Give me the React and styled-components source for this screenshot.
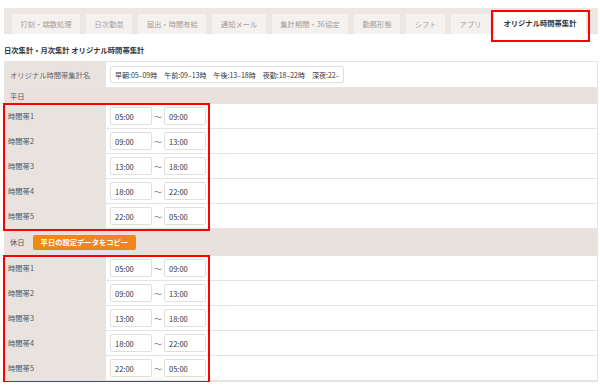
import styled, { createGlobalStyle } from "styled-components";

const GlobalStyle = createGlobalStyle`
  body {
    margin: 0;
    background: #fff;
    font-family: "Noto Sans CJK JP", "Noto Sans", sans-serif;
    color: #444;
  }
`

const tabs = [
    "打刻・端数処理",
    "日次勤怠",
    "届出・時間有給",
    "通知メール",
    "集計期間・36協定",
    "勤務形態",
    "シフト",
    "アプリ",
    "オリジナル時間帯集計",
];

const weekday = [
    ["05:00", "09:00"],
    ["09:00", "13:00"],
    ["13:00", "18:00"],
    ["18:00", "22:00"],
    ["22:00", "05:00"],
];

function TimeRows({ rows }) {
    return (
        <Marked>
            {rows.map((r, i) => (
                <Row key={i}>
                    <Label>時間帯{i + 1}</Label>
                    <Value>
                        <TimeInput defaultValue={r[0]} />
                        <Tilde>〜</Tilde>
                        <TimeInput defaultValue={r[1]} />
                    </Value>
                </Row>
            ))}
        </Marked>
    )
}

export default function App() {
    return (
        <>
            <GlobalStyle />
            <Page>
                <TabBar>
                    {tabs.map((t, i) => (
                        <Tab key={t} $active={i === tabs.length - 1}>{t}</Tab>
                    ))}
                </TabBar>
                <Title>日次集計・月次集計 オリジナル時間帯集計</Title>
                <Table>
                    <NameRow>
                        <Label $pad>オリジナル時間帯集計名</Label>
                        <Value>
                            <NameInput defaultValue="早朝:05–09時　午前:09–13時　午後:13–18時　夜勤:18–22時　深夜:22–05時" />
                        </Value>
                    </NameRow>
                    <Section>平日</Section>
                    <TimeRows rows={weekday} />
                    <Section $tall>
                        休日
                        <CopyButton>平日の設定データをコピー</CopyButton>
                    </Section>
                    <TimeRows rows={weekday} />
                </Table>
            </Page>
        </>
    )
}

const Page = styled.div`
  padding: 8px 2px 0 4px;
`

const TabBar = styled.div`
  display: flex;
  align-items: flex-end;
  gap: 6px;
  height: 26px;
  box-sizing: border-box;
  padding: 0 0 0 8px;
  background: #ede7e4;
`

const Tab = styled.div`
  position: relative;
  display: flex;
  align-items: center;
  height: ${p => (p.$active ? "22px" : "20px")};
  padding: 0 ${p => (p.$active ? "9.5px" : "8.5px")};
  margin-left: ${p => (p.$active ? "-2px" : "0")};
  background: ${p => (p.$active ? "#fff" : "#f5f1ef")};
  color: ${p => (p.$active ? "#333" : "#a39d9a")};
  font-size: 7.3px;
  font-weight: ${p => (p.$active ? "bold" : "normal")};
  white-space: nowrap;

  &::after {
    content: "";
    display: ${p => (p.$active ? "block" : "none")};
    position: absolute;
    left: -3px;
    right: -4px;
    top: -2px;
    bottom: -8px;
    border: 2px solid #f00;
  }
`

const Title = styled.div`
  margin: 11px 0 6px;
  font-size: 7.3px;
  font-weight: bold;
  color: #333;
`

const Table = styled.div`
  border: 1px solid #e9e4e1;
  border-left: none;
`

const NameRow = styled.div`
  display: grid;
  grid-template-columns: 102px 1fr;
  height: 25px;
  border-bottom: 1px solid #e9e4e1;
`

const Row = styled.div`
  display: grid;
  grid-template-columns: 102px 1fr;
  height: 25px;
  box-sizing: border-box;
  border-bottom: 1px solid #e9e4e1;
`

const Label = styled.div`
  display: flex;
  align-items: center;
  padding-left: ${p => (p.$pad ? "6px" : "4px")};
  background: #e9e3e0;
  font-size: 7.3px;
  color: ${p => (p.$pad ? "#666" : "#555")};
  white-space: nowrap;
`

const Value = styled.div`
  display: flex;
  align-items: center;
  padding-left: 4px;
  background: #fff;
`

const NameInput = styled.input`
  width: 234px;
  height: 17px;
  box-sizing: border-box;
  border: 1px solid #e2dedb;
  border-radius: 2px;
  padding: 0 4px;
  font-family: "Noto Sans CJK JP", sans-serif;
  font-size: 7px;
  color: #333;
  outline: none;
`

const TimeInput = styled.input`
  width: 42px;
  height: 18px;
  box-sizing: border-box;
  border: 1px solid #e2dedb;
  border-radius: 2px;
  padding: 0 4px;
  font-family: "Noto Sans CJK JP", sans-serif;
  font-size: 7.5px;
  color: #333;
  outline: none;
`

const Tilde = styled.span`
  width: 12px;
  text-align: center;
  font-size: 8px;
  color: #777;
`

const Section = styled.div`
  display: flex;
  align-items: center;
  gap: 8px;
  height: ${p => (p.$tall ? "26px" : "15px")};
  padding-left: 6px;
  background: #e8e1de;
  font-size: 7.3px;
  color: #555;
  border-bottom: 1px solid #e9e4e1;
`

const CopyButton = styled.div`
  display: flex;
  align-items: center;
  height: 15px;
  padding: 0 8px;
  border-radius: 2px;
  background: #f0861d;
  color: #fff;
  font-size: 7.3px;
  font-weight: bold;
`

const Marked = styled.div`
  position: relative;

  &::after {
    content: "";
    position: absolute;
    left: -1px;
    top: -1px;
    width: 207px;
    bottom: -2px;
    border: 2px solid #f00;
    box-sizing: border-box;
    pointer-events: none;
  }
`
